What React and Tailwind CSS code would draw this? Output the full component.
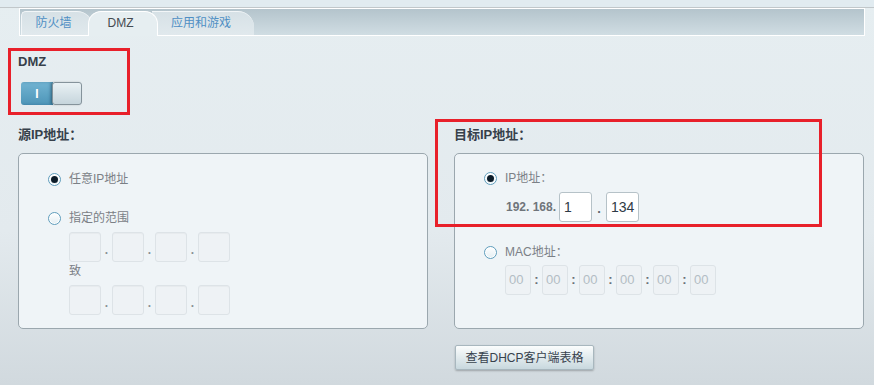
import React from 'react'

const font = { fontFamily: '"Liberation Sans", "Noto Sans CJK SC", sans-serif' }

function Radio({ checked }) {
  return (
    <span className="flex h-[13px] w-[13px] shrink-0 items-center justify-center rounded-full border border-[#5f9dbc] bg-[linear-gradient(#ffffff,#e4eef3)] shadow-[inset_0_0_0_1px_#ffffff]">
      {checked && <span className="h-[7px] w-[7px] rounded-full bg-[#0c1c29]" />}
    </span>
  )
}

function RadioRow({ checked, label, className = '' }) {
  return (
    <div className={`flex h-[16px] items-center gap-[8px] ${className}`}>
      <Radio checked={checked} />
      <span className="text-[12px] leading-[16px] text-[#7b8086]">{label}</span>
    </div>
  )
}

function GhostBox() {
  return <div className="h-[30px] w-[32px] rounded-[3px] border border-[#dde3e7] bg-[#eef2f5] shadow-[inset_0_1px_1px_rgba(0,0,0,0.03)]" />
}

function Dot() {
  return <span className="flex w-[11px] justify-center pt-[6px] text-[12px] font-bold leading-[16px] text-[#8a9096]">.</span>
}

function IpRow({ className = '' }) {
  return (
    <div className={`flex items-center ${className}`}>
      <GhostBox />
      <Dot />
      <GhostBox />
      <Dot />
      <GhostBox />
      <Dot />
      <GhostBox />
    </div>
  )
}

function Panel({ children }) {
  return (
    <div className="mt-[11px] h-[176px] rounded-[5px] border border-[#9ba7ae] bg-[#eff4f7] pl-[29px]">
      {children}
    </div>
  )
}

export default function App() {
  const macs = ['00', '00', '00', '00', '00', '00']

  return (
    <div style={font} className="relative h-[385px] w-[874px] overflow-hidden bg-[linear-gradient(180deg,#e6eef1_0%,#e3eaee_60%,#d1d9de_100%)]">
      <div className="h-[8px] border-b border-[#c1c7ca] bg-[#e1ebf0]" />

      <div className="ml-[19px] flex h-[28px] w-[846px] items-end border border-white bg-[linear-gradient(#b4c4cc,#d0dde3)] pl-px">
        <div className="flex h-[24px] w-[72px] items-center justify-center rounded-tl-[5px] rounded-tr-[16px] border-l border-t border-[#f2f6f8] bg-[linear-gradient(#d6e1e6,#e1e9ed)] pb-[2px] pr-[8px] text-[12px] text-[#4f8fc4]">
          防火墙
        </div>
        <div className="relative z-10 -ml-[5px] -mb-px flex h-[25px] w-[70px] items-center justify-center rounded-t-[13px] border-x border-t border-white bg-[#e6eef1] pb-[3px] pr-[5px] text-[12px] text-[#444a50]">
          DMZ
        </div>
        <div className="-ml-[6px] flex h-[24px] w-[102px] items-center justify-center rounded-tr-[16px] border-t border-[#f2f6f8] bg-[linear-gradient(#d6e1e6,#e1e9ed)] pb-[2px] pr-[4px] text-[12px] text-[#4f8fc4]">
          应用和游戏
        </div>
      </div>

      <div className="ml-[8px] mt-[12px] h-[67px] w-[122px] border-[3px] border-[#e8202a] pl-[7px] pt-[3px]">
        <div className="text-[13px] font-bold leading-[15px] text-[#36404a]">DMZ</div>
        <div className="ml-[3px] mt-[13px] flex h-[23px] w-[61px]">
          <div className="flex w-[32px] items-center justify-center rounded-l-[3px] bg-[linear-gradient(#72b4d2,#4d95b8)] text-[12px] font-bold text-white shadow-[inset_-3px_0_3px_rgba(30,80,110,0.35)]">
            I
          </div>
          <div className="-ml-px h-[23px] w-[30px] rounded-[3px] border border-[#85939b] bg-[linear-gradient(#e9f1f4,#c6d5dc)] shadow-[-1px_0_2px_rgba(0,0,0,0.2)]" />
        </div>
      </div>

      <div className="mt-[12px] grid grid-cols-[410px_410px] gap-x-[26px] pl-[18px]">
        <div>
          <div className="text-[13px] font-bold leading-[15px] text-[#36404a]">源IP地址：</div>
          <Panel>
            <RadioRow checked label="任意IP地址" className="mt-[17px]" />
            <RadioRow label="指定的范围" className="mt-[23px]" />
            <div className="pl-[21px]">
              <IpRow className="mt-[6px]" />
              <div className="mt-px text-[12px] leading-[16px] text-[#7b8086]">致</div>
              <IpRow className="mt-[6px]" />
            </div>
          </Panel>
        </div>

        <div className="relative">
          <div className="text-[13px] font-bold leading-[15px] text-[#36404a]">目标IP地址：</div>
          <Panel>
            <RadioRow checked label="IP地址：" className="mt-[16px]" />
            <div className="ml-[22px] mt-[6px] flex items-center">
              <span className="text-[12px] font-bold text-[#6f757b]">192. 168.</span>
              <div className="ml-[3px] flex h-[30px] w-[33px] items-center rounded-[3px] border border-[#b6c2c8] bg-white pl-[4px] text-[14px] text-[#2e3a46]">1</div>
              <span className="flex w-[14px] justify-center pt-[4px] text-[13px] font-bold text-[#5d646b]">.</span>
              <div className="flex h-[30px] w-[33px] items-center rounded-[3px] border border-[#b6c2c8] bg-white pl-[4px] text-[14px] text-[#2e3a46]">134</div>
            </div>
            <RadioRow label="MAC地址：" className="mt-[22px]" />
            <div className="ml-[21px] mt-[5px] flex items-center">
              {macs.map((m, i) => (
                <React.Fragment key={i}>
                  {i > 0 && <span className="flex w-[11px] justify-center text-[13px] font-bold text-[#6a7077]">:</span>}
                  <div className="flex h-[30px] w-[26px] items-center rounded-[3px] border border-[#dde3e7] bg-[#eef2f5] pl-[3px] text-[13px] text-[#b3bdc4]">{m}</div>
                </React.Fragment>
              ))}
            </div>
          </Panel>
          <button className="ml-[1px] mt-[16px] flex h-[25px] w-[139px] items-center justify-center rounded-[2px] border border-[#a8b7be] bg-[linear-gradient(#fbfdfd,#c8d8de)] text-[12px] text-[#37424d] shadow-[0_1px_2px_rgba(0,0,0,0.25)]">
            查看DHCP客户端表格
          </button>
          <div className="absolute -left-[19px] -top-[8px] h-[108px] w-[387px] border-[3px] border-[#e8202a]" />
        </div>
      </div>
    </div>
  )
}
